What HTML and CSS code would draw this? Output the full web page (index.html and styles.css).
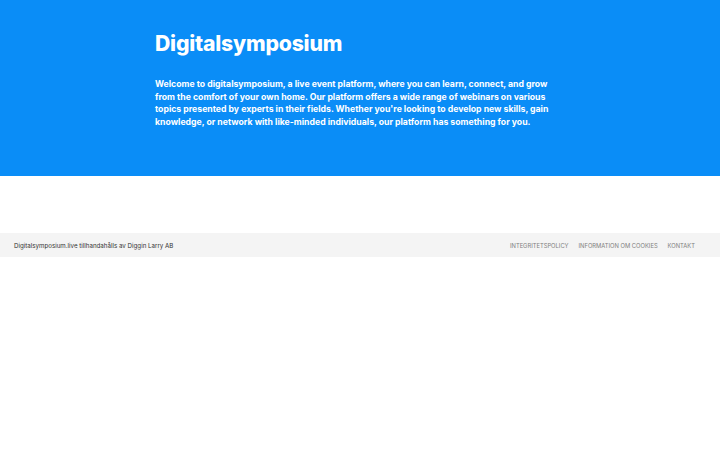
FILE: index.html
```html
<!DOCTYPE html>
<html lang="sv">
<head>
<meta charset="utf-8">
<title>Digitalsymposium</title>
<link rel="stylesheet" href="styles.css">
</head>
<body>
<header class="hero">
  <div class="hero-inner">
    <h1 class="title">Digitalsymposium</h1>
    <p class="intro">Welcome to digitalsymposium, a live event platform, where you can learn, connect, and grow from the comfort of your own home. Our platform offers a wide range of webinars on various topics presented by experts in their fields. Whether you're looking to develop new skills, gain knowledge, or network with like-minded individuals, our platform has something for you.</p>
  </div>
</header>
<main class="spacer"></main>
<footer class="footer">
  <span class="credit">Digitalsymposium.live tillhandahålls av Diggin Larry AB</span>
  <nav class="links">
    <a href="#">Integritetspolicy</a>
    <a href="#">Information om cookies</a>
    <a href="#">Kontakt</a>
  </nav>
</footer>
</body>
</html>
```
FILE: styles.css
```css
* { box-sizing: border-box; }
html, body { margin: 0; padding: 0; background: #fff; }
body { font-family: Inter, "Open Sans", "Liberation Sans", sans-serif; }
.hero { background: #0a8df7; color: #fff; height: 176px; }
.hero-inner { width: 410px; margin-left: 155px; padding-top: 30px; }
.title { margin: 0; font-size: 21.2px; font-weight: 800; line-height: 26px; letter-spacing: -0.2px; }
.intro { margin: 22px 0 0; font-size: 8.7px; font-weight: 700; line-height: 12.7px; width: 396px; }
.spacer { height: 57px; }
.footer { background: #f4f4f4; height: 24px; display: flex; align-items: center; justify-content: space-between; padding: 0 25px 0 14px; font-size: 6.2px; }
.credit { color: #333; }
.links { display: flex; gap: 10px; }
.links a { color: #808080; text-decoration: none; text-transform: uppercase; font-size: 5.8px; }
```
